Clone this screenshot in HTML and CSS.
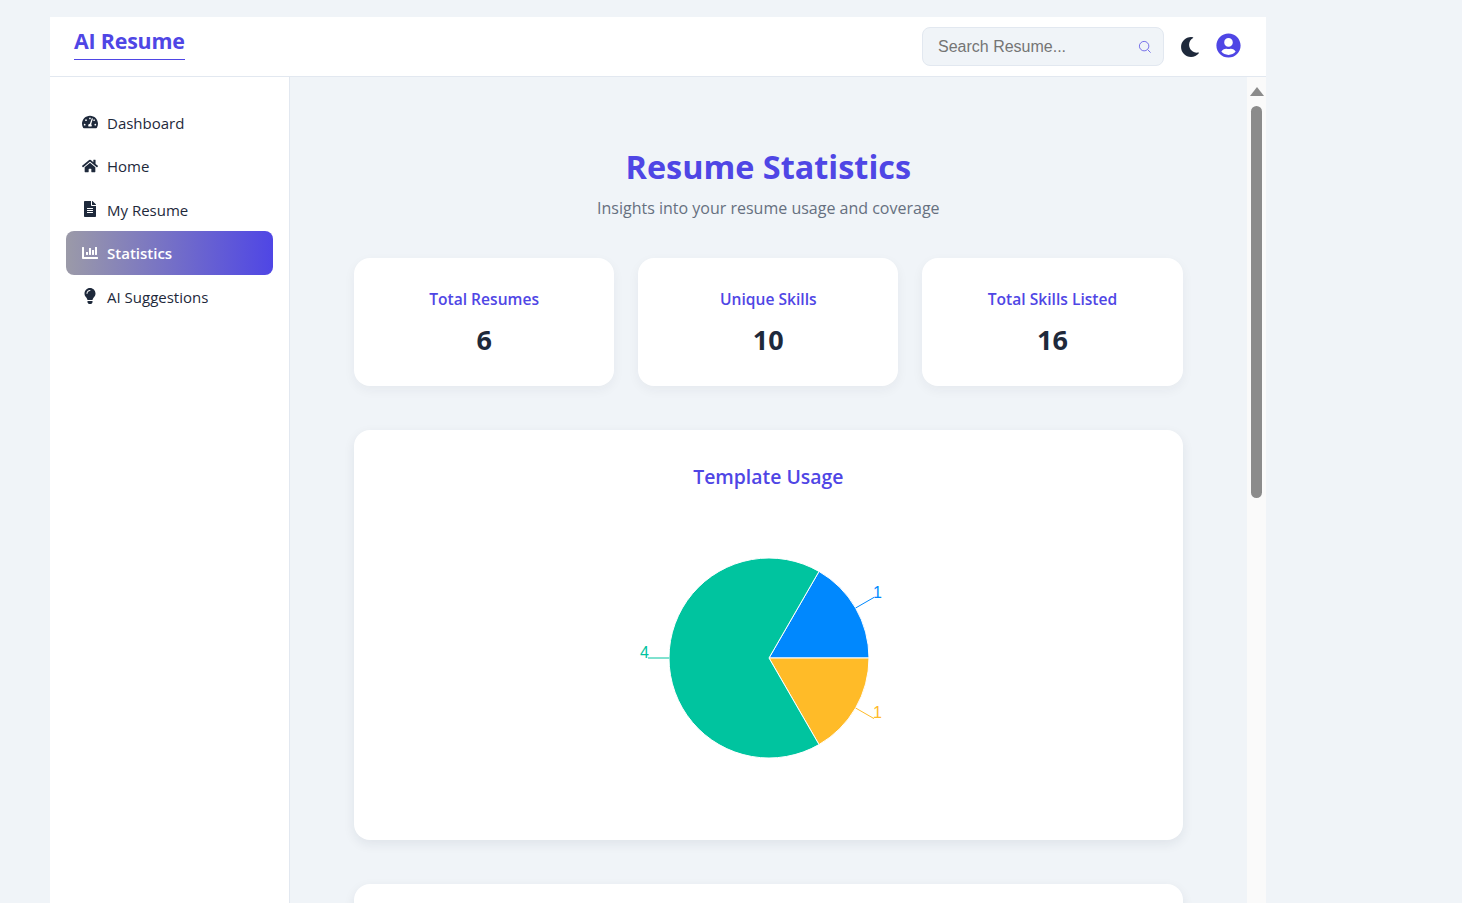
FILE: index.html
```html
<!DOCTYPE html>
<html lang="en">
<head>
    <meta charset="UTF-8">
    <title>AI Resume</title>
    <link rel="stylesheet" href="styles.css">
</head>
<body>
<div class="app">
    <header class="topbar">
        <a class="logo">AI Resume</a>
        <div class="top-actions">
            <div class="search">
                <span class="search-text">Search Resume...</span>
                <svg class="search-icon" viewBox="0 0 16 16"><circle cx="7" cy="7" r="5.4"/><path d="M11 11l3.4 3.4"/></svg>
            </div>
            <svg class="moon" viewBox="0 0 512 512"><path d="M283.211 512c78.962 0 151.079-35.925 198.857-94.792 7.068-8.708-.639-21.43-11.562-19.35-124.203 23.654-238.262-71.576-238.262-196.954 0-72.222 38.662-138.635 101.498-174.394 9.686-5.512 7.25-20.197-3.756-22.23A258.156 258.156 0 0 0 283.211 0c-141.309 0-256 114.511-256 256 0 141.309 114.511 256 256 256z"/></svg>
            <svg class="user" viewBox="0 0 496 512"><path d="M248 8C111 8 0 119 0 256s111 248 248 248 248-111 248-248S385 8 248 8zm0 96c48.6 0 88 39.4 88 88s-39.4 88-88 88-88-39.4-88-88 39.4-88 88-88zm0 344c-58.7 0-111.3-26.6-146.5-68.2 18.8-35.4 55.6-59.8 98.5-59.8 2.4 0 4.8.4 7.1 1.1 13 4.2 26.6 6.9 40.9 6.9 14.3 0 28-2.7 40.9-6.9 2.3-.7 4.7-1.1 7.1-1.1 42.9 0 79.7 24.4 98.5 59.8C359.3 421.4 306.7 448 248 448z"/></svg>
        </div>
    </header>
    <div class="layout">
        <nav class="sidebar">
            <a class="nav-item">
                <svg viewBox="0 0 576 512"><path d="M288 32C128.94 32 0 160.94 0 320c0 52.8 14.25 102.26 39.06 144.8 5.61 9.62 16.3 15.2 27.44 15.2h443c11.14 0 21.83-5.58 27.44-15.2C561.75 422.26 576 372.8 576 320c0-159.06-128.94-288-288-288zm0 64c14.71 0 26.58 10.13 30.32 23.65-1.11 2.26-2.64 4.23-3.45 6.67l-9.22 27.67c-5.13 3.49-10.97 6.01-17.64 6.01-17.67 0-32-14.33-32-32S270.33 96 288 96zM96 384c-17.67 0-32-14.33-32-32s14.33-32 32-32 32 14.33 32 32-14.33 32-32 32zm48-160c-17.67 0-32-14.33-32-32s14.33-32 32-32 32 14.33 32 32-14.33 32-32 32zm246.77-72.41l-61.33 184C343.13 347.33 352 364.54 352 384c0 11.72-3.38 22.55-8.88 32H232.88c-5.5-9.45-8.88-20.28-8.88-32 0-33.94 26.5-61.43 59.9-63.59l61.34-184.01c4.17-12.56 17.73-19.45 30.36-15.17 12.57 4.19 19.35 17.79 15.17 30.36zm14.66 57.2l15.52-46.55c3.47-1.29 7.13-2.23 11.05-2.23 17.67 0 32 14.33 32 32s-14.33 32-32 32c-11.38-.01-20.89-6.28-26.57-15.22zM480 384c-17.67 0-32-14.33-32-32s14.33-32 32-32 32 14.33 32 32-14.33 32-32 32z"/></svg>
                Dashboard
            </a>
            <a class="nav-item">
                <svg viewBox="0 0 576 512"><path d="M280.37 148.26L96 300.11V464a16 16 0 0 0 16 16l112.06-.29a16 16 0 0 0 15.92-16V368a16 16 0 0 1 16-16h64a16 16 0 0 1 16 16v95.64a16 16 0 0 0 16 16.05L464 480a16 16 0 0 0 16-16V300L295.67 148.26a12.19 12.19 0 0 0-15.3 0zM571.6 251.47L488 182.56V44.05a12 12 0 0 0-12-12h-56a12 12 0 0 0-12 12v72.61L318.47 43a48 48 0 0 0-61 0L4.34 251.47a12 12 0 0 0-1.6 16.9l25.5 31A12 12 0 0 0 45.15 301l235.22-193.74a12.19 12.19 0 0 1 15.3 0L530.9 301a12 12 0 0 0 16.9-1.6l25.5-31a12 12 0 0 0-1.7-16.93z"/></svg>
                Home
            </a>
            <a class="nav-item">
                <svg viewBox="0 0 384 512"><path d="M224 136V0H24C10.7 0 0 10.7 0 24v464c0 13.3 10.7 24 24 24h336c13.3 0 24-10.7 24-24V160H248c-13.2 0-24-10.8-24-24zm64 236c0 6.6-5.4 12-12 12H108c-6.6 0-12-5.4-12-12v-8c0-6.6 5.4-12 12-12h168c6.6 0 12 5.4 12 12v8zm0-64c0 6.6-5.4 12-12 12H108c-6.6 0-12-5.4-12-12v-8c0-6.6 5.4-12 12-12h168c6.6 0 12 5.4 12 12v8zm0-72v8c0 6.6-5.4 12-12 12H108c-6.6 0-12-5.4-12-12v-8c0-6.6 5.4-12 12-12h168c6.6 0 12 5.4 12 12zm96-114.1v6.1H256V0h6.1c6.4 0 12.5 2.5 17 7l97.9 98c4.5 4.5 7 10.6 7 16.9z"/></svg>
                My Resume
            </a>
            <a class="nav-item active">
                <svg viewBox="0 0 512 512"><path d="M332.8 320h38.4c6.4 0 12.8-6.4 12.8-12.8V172.8c0-6.4-6.4-12.8-12.8-12.8h-38.4c-6.4 0-12.8 6.4-12.8 12.8v134.4c0 6.4 6.4 12.8 12.8 12.8zm96 0h38.4c6.4 0 12.8-6.4 12.8-12.8V76.8c0-6.4-6.4-12.8-12.8-12.8h-38.4c-6.4 0-12.8 6.4-12.8 12.8v230.4c0 6.4 6.4 12.8 12.8 12.8zm-288 0h38.4c6.4 0 12.8-6.4 12.8-12.8v-70.4c0-6.4-6.4-12.8-12.8-12.8h-38.4c-6.4 0-12.8 6.4-12.8 12.8v70.4c0 6.4 6.4 12.8 12.8 12.8zm96 0h38.4c6.4 0 12.8-6.4 12.8-12.8V108.8c0-6.4-6.4-12.8-12.8-12.8h-38.4c-6.4 0-12.8 6.4-12.8 12.8v198.4c0 6.4 6.4 12.8 12.8 12.8zM496 384H64V80c0-8.84-7.16-16-16-16H16C7.16 64 0 71.16 0 80v336c0 17.67 14.33 32 32 32h464c8.84 0 16-7.16 16-16v-32c0-8.84-7.16-16-16-16z"/></svg>
                Statistics
            </a>
            <a class="nav-item">
                <svg viewBox="0 0 352 512"><path d="M96.06 454.35c.01 6.29 1.87 12.45 5.36 17.69l17.09 25.69a31.99 31.99 0 0 0 26.64 14.28h61.71a31.99 31.99 0 0 0 26.64-14.28l17.09-25.69a31.989 31.989 0 0 0 5.36-17.69l.04-38.35H96.01l.05 38.35zM0 176c0 44.37 16.45 84.85 43.56 115.78 16.52 18.85 42.36 58.23 52.21 91.45.04.26.07.52.11.78h160.24c.04-.26.07-.51.11-.78 9.85-33.22 35.69-72.6 52.21-91.45C335.55 260.85 352 220.37 352 176 352 78.61 272.91-.3 175.45 0 73.44.31 0 82.97 0 176zm176-80c-44.11 0-80 35.89-80 80 0 8.84-7.16 16-16 16s-16-7.16-16-16c0-61.76 50.24-112 112-112 8.84 0 16 7.16 16 16s-7.16 16-16 16z"/></svg>
                AI Suggestions
            </a>
        </nav>
        <main class="content">
            <h1 class="page-title">Resume Statistics</h1>
            <p class="page-sub">Insights into your resume usage and coverage</p>
            <div class="stats">
                <div class="stat-card">
                    <div class="stat-label">Total Resumes</div>
                    <div class="stat-value">6</div>
                </div>
                <div class="stat-card">
                    <div class="stat-label">Unique Skills</div>
                    <div class="stat-value">10</div>
                </div>
                <div class="stat-card">
                    <div class="stat-label">Total Skills Listed</div>
                    <div class="stat-value">16</div>
                </div>
            </div>
            <section class="chart-card">
                <h2 class="chart-title">Template Usage</h2>
                <svg class="pie" viewBox="0 0 300 300" width="300" height="300">
                    <path d="M150 150L200 63.4A100 100 0 0 1 250 150Z" fill="#0088fe" stroke="#fff"/>
                    <path d="M150 150L250 150A100 100 0 0 1 200 236.6Z" fill="#ffbb28" stroke="#fff"/>
                    <path d="M150 150L200 236.6A100 100 0 1 1 200 63.4Z" fill="#00c49f" stroke="#fff"/>
                    <path d="M236.6 100L255 89.4" stroke="#0088fe" fill="none"/>
                    <path d="M236.6 200L255 210.6" stroke="#ffbb28" fill="none"/>
                    <path d="M50 150L29 150" stroke="#00c49f" fill="none"/>
                    <text x="254" y="90" class="pie-label" fill="#0088fe">1</text>
                    <text x="254" y="210" class="pie-label" fill="#ffbb28">1</text>
                    <text x="21" y="150" class="pie-label" fill="#00c49f">4</text>
                </svg>
            </section>
            <section class="chart-card"></section>
        </main>
        <div class="scrollbar">
            <span class="scroll-up"></span>
            <span class="scroll-thumb"></span>
        </div>
    </div>
</div>
</body>
</html>
```

FILE: styles.css
```css
* {
    box-sizing: border-box;
}
html, body {
    height: 100%;
}
body {
    margin: 0;
    overflow: hidden;
    background-color: #f0f4f8;
    color: #1e293b;
    font-family: "Open Sans", "Noto Sans", sans-serif;
}
.app {
    width: 1216px;
    height: 886px;
    margin: 17px 0 0 50px;
    display: flex;
    flex-direction: column;
}
.topbar {
    height: 60px;
    flex-shrink: 0;
    display: flex;
    justify-content: space-between;
    align-items: center;
    padding: 0 25px 0 24px;
    background-color: white;
    border-bottom: 1px solid #e2e8f0;
}
.logo {
    margin-bottom: 6px;
    padding-bottom: 4px;
    color: #4f46e5;
    font-size: 21.4px;
    font-weight: 700;
    line-height: 28px;
    letter-spacing: -0.2px;
    border-bottom: 1px solid #4f46e5;
}
.top-actions {
    display: flex;
    align-items: center;
}
.search {
    width: 242px;
    height: 39px;
    display: flex;
    align-items: center;
    justify-content: space-between;
    padding: 0 11px 0 15px;
    background-color: #f0f4f8;
    border: 1px solid #e2e8f0;
    border-radius: 8px;
}
.search-text {
    color: #757575;
    font-family: "Liberation Sans", Arial, sans-serif;
    font-size: 16px;
}
.search-icon {
    width: 14px;
    height: 14px;
    fill: none;
    stroke: #4f46e5;
    stroke-width: 1;
    opacity: 0.85;
}
.moon {
    width: 20px;
    height: 20px;
    margin: 1px 0 0 16px;
    fill: #1e293b;
}
.user {
    width: 25px;
    height: 25px;
    margin: -3px 0 0 16px;
    fill: #4f46e5;
}
.layout {
    flex: 1;
    display: flex;
    min-height: 0;
}
.sidebar {
    width: 240px;
    flex-shrink: 0;
    padding: 23.9px 16px;
    background-color: white;
    border-right: 1px solid #e2e8f0;
}
.nav-item {
    height: 43.5px;
    display: flex;
    align-items: center;
    gap: 9px;
    padding: 0 16px;
    border-radius: 8px;
    font-size: 15px;
}
.nav-item svg {
    width: 16px;
    height: 16px;
    fill: #1e293b;
    margin-top: -1px;
}
.nav-item.active {
    background: linear-gradient(90deg, #9b9aa8, #4f46e5);
    color: white;
    font-weight: 600;
}
.nav-item.active svg {
    fill: white;
}
.content {
    flex: 1;
    min-width: 0;
    overflow: hidden;
    padding: 0 64.4px 0 64px;
    text-align: center;
}
.page-title {
    margin: 66px 0 0;
    color: #4f46e5;
    font-size: 32.4px;
    font-weight: 700;
    line-height: 46px;
}
.page-sub {
    margin: 8px 0 0;
    color: #667080;
    font-size: 16px;
    line-height: 22px;
}
.stats {
    display: grid;
    grid-template-columns: repeat(3, 1fr);
    gap: 24px;
    margin-top: 39px;
}
.stat-card {
    height: 128px;
    padding-top: 29px;
    background-color: white;
    border-radius: 16px;
    box-shadow: 0 4px 12px rgba(30, 41, 59, 0.05);
}
.stat-label {
    color: #4f46e5;
    font-size: 15.6px;
    font-weight: 600;
    line-height: 24px;
}
.stat-value {
    margin-top: 11px;
    font-size: 27px;
    font-weight: 700;
    line-height: 36px;
}
.chart-card {
    height: 410px;
    margin-top: 44px;
    padding-top: 32px;
    background-color: white;
    border-radius: 16px;
    box-shadow: 0 4px 12px rgba(30, 41, 59, 0.08);
}
.chart-title {
    margin: 0;
    color: #4f46e5;
    font-size: 19.4px;
    font-weight: 600;
    line-height: 30px;
}
.pie {
    display: block;
    margin: 16px 0 0 265px;
}
.pie-label {
    font-family: "Liberation Sans", Arial, sans-serif;
    font-size: 16px;
}
.scrollbar {
    width: 19px;
    flex-shrink: 0;
    display: flex;
    flex-direction: column;
    align-items: center;
    background-color: #fafafa;
}
.scroll-up {
    margin-top: 10px;
    border-left: 7px solid transparent;
    border-right: 7px solid transparent;
    border-bottom: 9px solid #8b8b8b;
}
.scroll-thumb {
    width: 11px;
    height: 392px;
    margin-top: 10px;
    background-color: #8b8b8b;
    border-radius: 6px;
}
```
